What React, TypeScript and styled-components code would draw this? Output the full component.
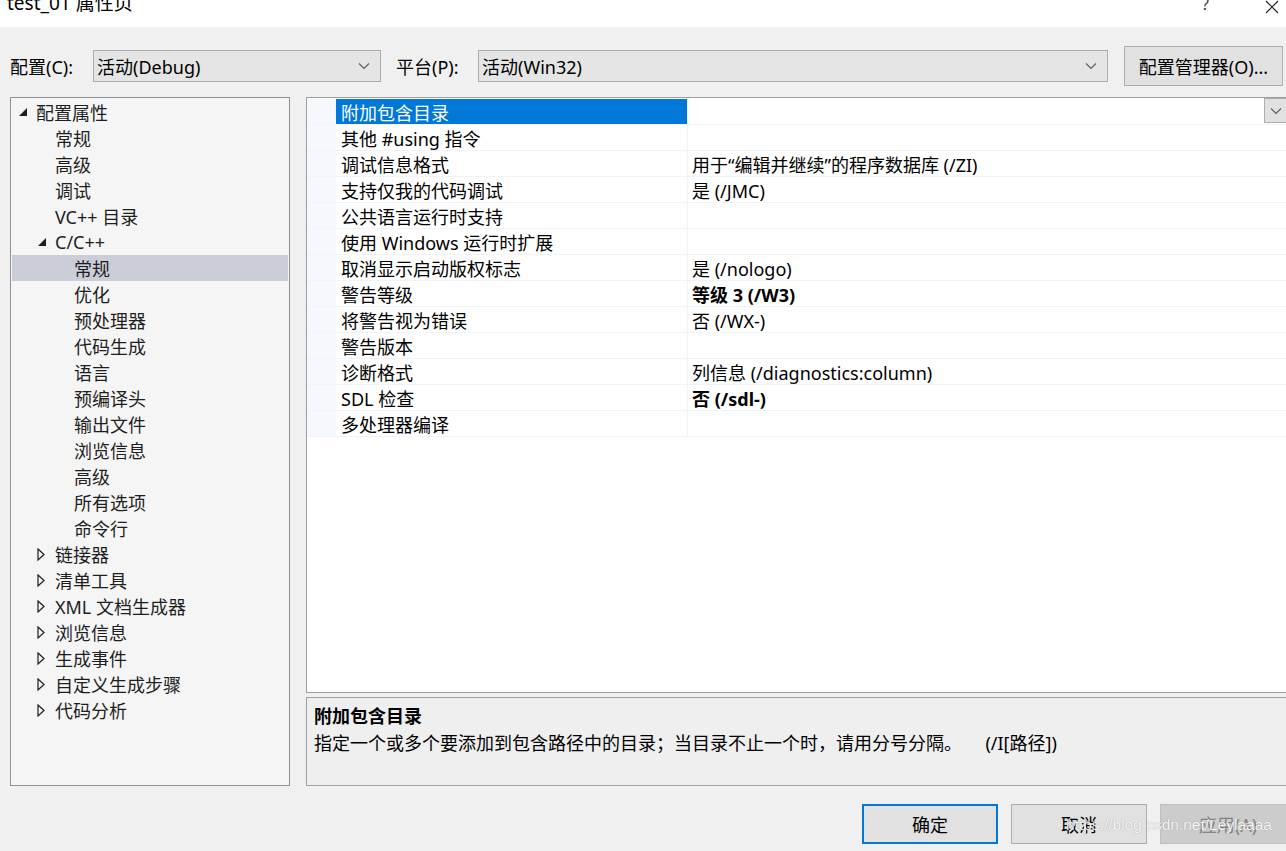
import React from "react";
import styled, { createGlobalStyle } from "styled-components";

const GlobalStyle = createGlobalStyle`
  html, body {
    margin: 0;
    padding: 0;
    background: #f0f0f0;
    overflow: hidden;
  }
  body {
    font-family: "Noto Sans", "Noto Sans CJK SC", sans-serif;
    font-size: 18px;
    color: #000;
  }
`;

const Window = styled.div`
  width: 1286px;
  height: 851px;
  display: flex;
  flex-direction: column;
  position: relative;
  overflow: hidden;
`;

const TitleBar = styled.div`
  height: 27px;
  flex: none;
  background: #fff;
  display: flex;
  align-items: flex-start;
  overflow: hidden;
  padding-left: 7px;

  .title {
    flex: 1;
    line-height: 18px;
    margin-top: -6px;
    font-size: 19px;
  }

  .help {
    width: 62px;
    line-height: 18px;
    margin-top: -5px;
    font-size: 16px;
    color: #333;
  }

  .close {
    width: 22px;
    margin-top: -3px;
  }
`;

const ConfigRow = styled.div`
  height: 39px;
  margin-top: 19px;
  display: flex;
  align-items: center;
  padding-left: 10px;
`;

const Label = styled.span<{ $w: number }>`
  width: ${({ $w }) => $w}px;
  flex: none;
  white-space: nowrap;
`;

const Select = styled.div<{ $w: number }>`
  width: ${({ $w }) => $w}px;
  height: 32px;
  box-sizing: border-box;
  flex: none;
  background: #e5e5e5;
  border: 1px solid #acacac;
  display: flex;
  align-items: center;
  padding: 0 10px 0 3px;

  span {
    flex: 1;
  }
`;

const Gap = styled.div<{ $w: number }>`
  width: ${({ $w }) => $w}px;
  flex: none;
`;

const Button = styled.div<{ $w: number; $primary?: boolean; $disabled?: boolean }>`
  width: ${({ $w }) => $w}px;
  height: 40px;
  box-sizing: border-box;
  flex: none;
  display: flex;
  align-items: center;
  justify-content: center;
  background: ${({ $disabled }) => ($disabled ? "#cccccc" : "#e1e1e1")};
  border: ${({ $primary, $disabled }) =>
    $primary ? "2px solid #0078d7" : $disabled ? "1px solid #bfbfbf" : "1px solid #adadad"};
  color: ${({ $disabled }) => ($disabled ? "#838383" : "#000")};
  white-space: nowrap;
`;

const Main = styled.div`
  margin-top: 12px;
  height: 689px;
  display: flex;
  padding-left: 10px;
  gap: 16px;
`;

const Tree = styled.div`
  width: 280px;
  flex: none;
  box-sizing: border-box;
  background: #f5f5f5;
  border: 1px solid #8f9199;
  padding: 1px 1px;
`;

const TreeRow = styled.div<{ $level: number; $selected?: boolean }>`
  height: 26px;
  display: flex;
  align-items: center;
  padding-left: ${({ $level }) => 6 + $level * 19}px;
  background: ${({ $selected }) => ($selected ? "#cbcdd9" : "transparent")};
  color: #1e1e1e;
  white-space: nowrap;

  .arrow {
    width: 18px;
    flex: none;
    display: flex;
    align-items: center;
  }
`;

const RightCol = styled.div`
  flex: 1;
  display: flex;
  flex-direction: column;
  gap: 4px;
`;

const Grid = styled.div`
  height: 597px;
  box-sizing: border-box;
  background: #fff;
  border: 1px solid #a0a0a0;
  border-right: none;
  padding-top: 1px;
`;

const GridRow = styled.div`
  height: 26px;
  display: flex;
  box-sizing: border-box;
  border-bottom: 1px solid #f0f3f9;
  background: #fff;

  .margin {
    width: 29px;
    flex: none;
    background: #f5f8fd;
  }
`;

const NameCell = styled.div<{ $selected?: boolean }>`
  width: 352px;
  flex: none;
  box-sizing: border-box;
  padding-left: 5px;
  display: flex;
  align-items: center;
  background: ${({ $selected }) => ($selected ? "#0078d7" : "#fff")};
  color: ${({ $selected }) => ($selected ? "#fff" : "#000")};
  border-right: 1px solid #f0f3f9;
  white-space: nowrap;
`;

const ValueCell = styled.div<{ $bold?: boolean }>`
  flex: 1;
  padding-left: 4px;
  display: flex;
  align-items: center;
  font-weight: ${({ $bold }) => ($bold ? 700 : 400)};
  white-space: nowrap;
`;

const DropButton = styled.div`
  width: 22px;
  height: 25px;
  box-sizing: border-box;
  margin-top: -1px;
  background: #e1e1e1;
  border: 1px solid #adadad;
  border-right: none;
  display: flex;
  align-items: center;
  justify-content: center;
`;

const Description = styled.div`
  height: 89px;
  box-sizing: border-box;
  background: #efefef;
  border: 1px solid #a0a0a0;
  border-right: none;
  padding: 5px 7px;
  line-height: 27px;

  h4 {
    margin: 0;
    font-size: 18px;
    font-weight: 700;
  }

  p {
    margin: 0;
    white-space: pre;
  }
`;

const Footer = styled.div`
  margin-top: 18px;
  display: flex;
  gap: 13px;
  padding-left: 862px;
`;

const Watermark = styled.div`
  position: absolute;
  left: 1066px;
  top: 816px;
  font-family: "Liberation Sans", Arial, sans-serif;
  font-size: 15.5px;
  color: rgba(255, 255, 255, 0.92);
  text-shadow: 0 0 1px rgba(110, 110, 110, 0.7);
  pointer-events: none;
  white-space: nowrap;
`;

const Chevron = () => (
  <svg width="12" height="8" viewBox="0 0 12 8">
    <path d="M1 1.5 L6 6.5 L11 1.5" fill="none" stroke="#606060" strokeWidth="1.2" />
  </svg>
);

const Expanded = () => (
  <svg width="10" height="10" viewBox="0 0 10 10">
    <path d="M9 1 L9 9 L1 9 Z" fill="#1e1e1e" />
  </svg>
);

const Collapsed = () => (
  <svg width="8" height="13" viewBox="0 0 8 13">
    <path d="M1 1 L7 6.5 L1 12 Z" fill="none" stroke="#1e1e1e" strokeWidth="1.2" />
  </svg>
);

type TreeItem = { label: string; level: number; arrow?: "open" | "closed"; selected?: boolean };

const treeItems: TreeItem[] = [
  { label: "配置属性", level: 0, arrow: "open" },
  { label: "常规", level: 1 },
  { label: "高级", level: 1 },
  { label: "调试", level: 1 },
  { label: "VC++ 目录", level: 1 },
  { label: "C/C++", level: 1, arrow: "open" },
  { label: "常规", level: 2, selected: true },
  { label: "优化", level: 2 },
  { label: "预处理器", level: 2 },
  { label: "代码生成", level: 2 },
  { label: "语言", level: 2 },
  { label: "预编译头", level: 2 },
  { label: "输出文件", level: 2 },
  { label: "浏览信息", level: 2 },
  { label: "高级", level: 2 },
  { label: "所有选项", level: 2 },
  { label: "命令行", level: 2 },
  { label: "链接器", level: 1, arrow: "closed" },
  { label: "清单工具", level: 1, arrow: "closed" },
  { label: "XML 文档生成器", level: 1, arrow: "closed" },
  { label: "浏览信息", level: 1, arrow: "closed" },
  { label: "生成事件", level: 1, arrow: "closed" },
  { label: "自定义生成步骤", level: 1, arrow: "closed" },
  { label: "代码分析", level: 1, arrow: "closed" },
];

const props: { name: string; value?: string; bold?: boolean }[] = [
  { name: "附加包含目录" },
  { name: "其他 #using 指令" },
  { name: "调试信息格式", value: "用于“编辑并继续”的程序数据库 (/ZI)" },
  { name: "支持仅我的代码调试", value: "是 (/JMC)" },
  { name: "公共语言运行时支持" },
  { name: "使用 Windows 运行时扩展" },
  { name: "取消显示启动版权标志", value: "是 (/nologo)" },
  { name: "警告等级", value: "等级 3 (/W3)", bold: true },
  { name: "将警告视为错误", value: "否 (/WX-)" },
  { name: "警告版本" },
  { name: "诊断格式", value: "列信息 (/diagnostics:column)" },
  { name: "SDL 检查", value: "否 (/sdl-)", bold: true },
  { name: "多处理器编译" },
];

export default function App() {
  return (
    <Window>
      <GlobalStyle />
      <TitleBar>
        <span className="title">test_01 属性页</span>
        <span className="help">?</span>
        <span className="close">
          <svg width="16" height="16" viewBox="0 0 16 16">
            <path d="M2 1 L14 13 M14 1 L2 13" stroke="#222" strokeWidth="1.2" />
          </svg>
        </span>
      </TitleBar>

      <ConfigRow>
        <Label $w={83}>配置(C):</Label>
        <Select $w={288}>
          <span>活动(Debug)</span>
          <Chevron />
        </Select>
        <Gap $w={15} />
        <Label $w={82}>平台(P):</Label>
        <Select $w={630}>
          <span>活动(Win32)</span>
          <Chevron />
        </Select>
        <Gap $w={16} />
        <Button $w={159}>配置管理器(O)...</Button>
      </ConfigRow>

      <Main>
        <Tree>
          {treeItems.map((item, i) => (
            <TreeRow key={i} $level={item.level} $selected={item.selected}>
              <span className="arrow">
                {item.arrow === "open" && <Expanded />}
                {item.arrow === "closed" && <Collapsed />}
              </span>
              {item.label}
            </TreeRow>
          ))}
        </Tree>

        <RightCol>
          <Grid>
            {props.map((p, i) => (
              <GridRow key={i}>
                <div className="margin" />
                <NameCell $selected={i === 0}>{p.name}</NameCell>
                <ValueCell $bold={p.bold}>{p.value}</ValueCell>
                {i === 0 && (
                  <DropButton>
                    <Chevron />
                  </DropButton>
                )}
              </GridRow>
            ))}
          </Grid>
          <Description>
            <h4>附加包含目录</h4>
            <p>指定一个或多个要添加到包含路径中的目录；当目录不止一个时，请用分号分隔。     (/I[路径])</p>
          </Description>
        </RightCol>
      </Main>

      <Footer>
        <Button $w={136} $primary>确定</Button>
        <Button $w={136}>取消</Button>
        <Button $w={136} $disabled>应用(A)</Button>
      </Footer>
      <Watermark>https://blog.csdn.net/Leylaaaa</Watermark>
    </Window>
  );
}
